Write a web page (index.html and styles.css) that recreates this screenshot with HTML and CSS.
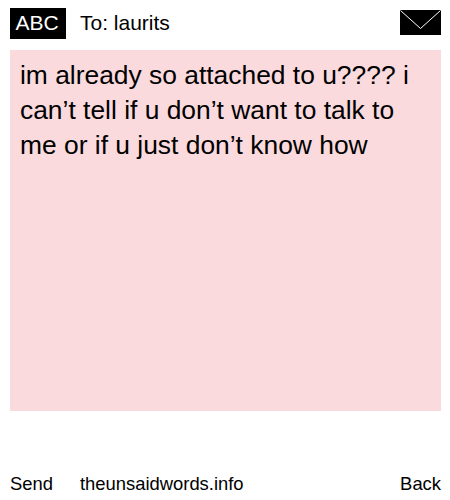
FILE: index.html
```html
<!DOCTYPE html>
<html lang="en">
<head>
  <meta charset="UTF-8">
  <meta name="viewport" content="width=device-width, initial-scale=1.0">
  <title>The Unsaid Words</title>
  <link rel="stylesheet" href="styles.css">
</head>
<body>
  <div class="container">
    <div class="header">
      <div class="abc">ABC</div>
      <div class="to">To: laurits</div>
      <svg class="envelope" width="41" height="25" viewBox="0 0 41 25">
        <rect width="41" height="25" fill="#000000"/>
        <path d="M0.5 0.5 L20.5 18.5 L40.5 0.5" fill="none" stroke="#ffffff" stroke-width="1"/>
      </svg>
    </div>
    <div class="message">im already so attached to u???? i can’t tell if u don’t want to talk to me or if u just don’t know how</div>
    <div class="footer">
      <span class="send">Send</span>
      <span class="site">theunsaidwords.info</span>
      <span class="back">Back</span>
    </div>
  </div>
</body>
</html>
```

FILE: styles.css
```css
body {
  font-family: "Liberation Sans", Arial, sans-serif;
  background-color: #ffffff;
  color: #000000;
  margin: 0;
}

.container {
  width: 431px;
  height: 500px;
  padding-left: 10px;
  display: flex;
  flex-direction: column;
}

.header {
  height: 50px;
  display: flex;
  align-items: center;
  font-size: 21px;
}

.abc {
  width: 56px;
  height: 31px;
  line-height: 29px;
  margin-top: -3px;
  padding-right: 2px;
  box-sizing: border-box;
  background-color: #000000;
  color: #ffffff;
  text-align: center;
}

.to {
  margin-left: 14px;
  margin-top: -4px;
}

.envelope {
  margin-left: auto;
  margin-top: -5px;
}

.message {
  height: 361px;
  box-sizing: border-box;
  padding: 8px 10px;
  background-color: #fadadd;
  font-size: 26.4px;
  line-height: 35px;
}

.footer {
  display: flex;
  margin-top: 62px;
  font-size: 18.4px;
}

.send {
  width: 70px;
}

.back {
  margin-left: auto;
}
```
